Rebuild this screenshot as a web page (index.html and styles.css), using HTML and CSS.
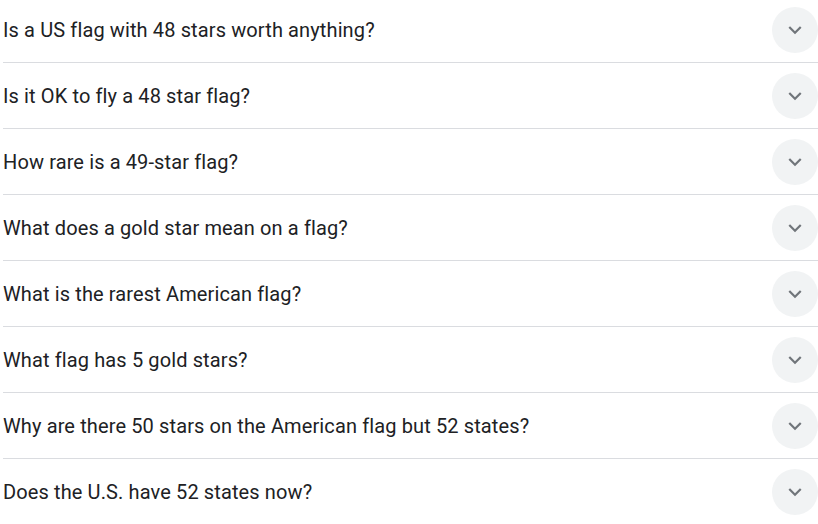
FILE: index.html
```html
<!DOCTYPE html>
<html>
<head>
<meta charset="utf-8">
<link rel="stylesheet" href="styles.css">
</head>
<body>
<div class="faq">
  <div class="row"><span class="q">Is a US flag with 48 stars worth anything?</span><span class="btn"><svg viewBox="0 0 24 24" width="26" height="26"><path d="M16.59 8.59L12 13.17 7.41 8.59 6 10l6 6 6-6z"/></svg></span></div>
  <div class="row"><span class="q">Is it OK to fly a 48 star flag?</span><span class="btn"><svg viewBox="0 0 24 24" width="26" height="26"><path d="M16.59 8.59L12 13.17 7.41 8.59 6 10l6 6 6-6z"/></svg></span></div>
  <div class="row"><span class="q">How rare is a 49-star flag?</span><span class="btn"><svg viewBox="0 0 24 24" width="26" height="26"><path d="M16.59 8.59L12 13.17 7.41 8.59 6 10l6 6 6-6z"/></svg></span></div>
  <div class="row"><span class="q">What does a gold star mean on a flag?</span><span class="btn"><svg viewBox="0 0 24 24" width="26" height="26"><path d="M16.59 8.59L12 13.17 7.41 8.59 6 10l6 6 6-6z"/></svg></span></div>
  <div class="row"><span class="q">What is the rarest American flag?</span><span class="btn"><svg viewBox="0 0 24 24" width="26" height="26"><path d="M16.59 8.59L12 13.17 7.41 8.59 6 10l6 6 6-6z"/></svg></span></div>
  <div class="row"><span class="q">What flag has 5 gold stars?</span><span class="btn"><svg viewBox="0 0 24 24" width="26" height="26"><path d="M16.59 8.59L12 13.17 7.41 8.59 6 10l6 6 6-6z"/></svg></span></div>
  <div class="row"><span class="q">Why are there 50 stars on the American flag but 52 states?</span><span class="btn"><svg viewBox="0 0 24 24" width="26" height="26"><path d="M16.59 8.59L12 13.17 7.41 8.59 6 10l6 6 6-6z"/></svg></span></div>
  <div class="row last"><span class="q">Does the U.S. have 52 states now?</span><span class="btn"><svg viewBox="0 0 24 24" width="26" height="26"><path d="M16.59 8.59L12 13.17 7.41 8.59 6 10l6 6 6-6z"/></svg></span></div>
</div>
</body>
</html>
```
FILE: styles.css
```css
html, body {
  margin: 0;
  padding: 0;
  background: #ffffff;
  overflow: hidden;
}
.faq {
  margin-top: -3px;
  padding-left: 3px;
  width: 815px;
  font-family: Roboto, "Noto Sans", sans-serif;
  color: #202124;
}
.row {
  height: 65px;
  display: flex;
  align-items: center;
  justify-content: space-between;
  border-bottom: 1px solid #dadce0;
}
.row.last {
  border-bottom: none;
}
.q {
  font-size: 20px;
  line-height: 28px;
  letter-spacing: 0.12px;
}
.btn {
  width: 46px;
  height: 46px;
  border-radius: 50%;
  background: #f1f3f4;
  display: flex;
  align-items: center;
  justify-content: center;
  flex-shrink: 0;
}
.btn svg {
  fill: #70757a;
}
```
